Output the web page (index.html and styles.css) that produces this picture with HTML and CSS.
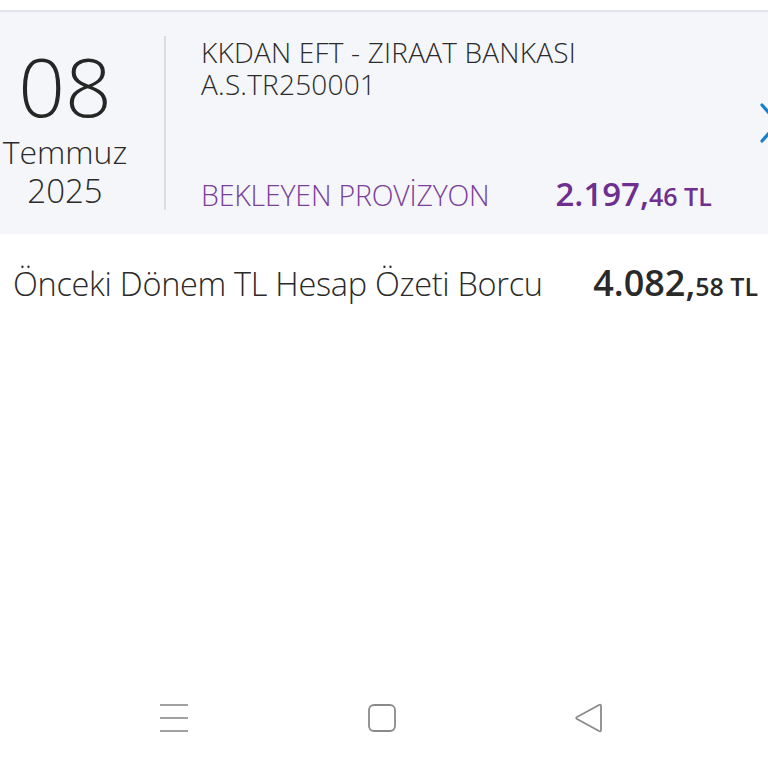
FILE: index.html
```html
<!DOCTYPE html>
<html>
<head>
<meta charset="utf-8">
<link rel="stylesheet" href="styles.css">
</head>
<body>
<div class="screen">
  <div class="top-gap"></div>
  <div class="card">
    <div class="date">
      <div class="day">08</div>
      <div class="month">Temmuz</div>
      <div class="year">2025</div>
    </div>
    <div class="divider"></div>
    <div class="info">
      <div class="desc"><div class="line">KKDAN EFT - ZIRAAT BANKASI</div><div class="line">A.S.TR250001</div></div>
      <div class="status-row">
        <span class="status">BEKLEYEN PROVİZYON</span>
        <span class="amount purple"><span class="big">2.197,</span><span class="small">46 TL</span></span>
      </div>
    </div>
    <div class="chev">
      <svg width="20" height="40" viewBox="0 0 20 40"><polyline points="2,2 18,20 2,38" fill="none" stroke="#1b7fc6" stroke-width="3.2" stroke-linecap="round" stroke-linejoin="round"/></svg>
    </div>
  </div>
  <div class="summary">
    <span class="label">Önceki Dönem TL Hesap Özeti Borcu</span>
    <span class="amount dark"><span class="big">4.082,</span><span class="small">58 TL</span></span>
  </div>
  <div class="spacer"></div>
  <div class="navbar">
    <svg class="nav-ico" width="30" height="30" viewBox="0 0 30 30"><g stroke="#8a8a8a" stroke-width="1.6"><line x1="1" y1="2" x2="29" y2="2"/><line x1="1" y1="15" x2="29" y2="15"/><line x1="1" y1="28" x2="29" y2="28"/></g></svg>
    <svg class="nav-ico" width="30" height="30" viewBox="0 0 30 30"><rect x="2" y="2" width="26" height="26" rx="5" fill="none" stroke="#8a8a8a" stroke-width="1.8"/></svg>
    <svg class="nav-ico" width="30" height="30" viewBox="0 0 30 30"><path d="M27 3 L27 27 Q27 29 25 28 L3 16 Q1.5 15 3 14 L25 2 Q27 1 27 3 Z" fill="none" stroke="#8a8a8a" stroke-width="1.8" stroke-linejoin="round"/></svg>
  </div>
</div>
</body>
</html>
```
FILE: styles.css
```css
html, body {
  margin: 0;
  padding: 0;
  background: #ffffff;
}
.screen {
  width: 768px;
  height: 768px;
  overflow: hidden;
  display: flex;
  flex-direction: column;
  font-family: "Open Sans", "Liberation Sans", sans-serif;
  color: #2b2b2b;
}
.top-gap {
  height: 10px;
  flex: none;
  border-bottom: 2px solid #e2e2ec;
}
.card {
  flex: none;
  height: 222px;
  background: #f5f6fa;
  display: flex;
  align-items: stretch;
  position: relative;
}
.date {
  width: 130px;
  flex: none;
  display: flex;
  flex-direction: column;
  align-items: center;
  font-weight: 300;
  padding-top: 30px;
}
.day {
  font-size: 82px;
  line-height: 86px;
  color: #262626;
}
.month {
  font-size: 32px;
  line-height: 38px;
  margin-top: 5px;
}
.year {
  font-size: 33px;
  line-height: 40px;
}
.divider {
  width: 2px;
  flex: none;
  background: #dcdce2;
  margin: 24px 0 24px 34px;
}
.info {
  flex: 1;
  display: flex;
  flex-direction: column;
  justify-content: space-between;
  padding: 24px 0 18px 35px;
}
.desc {
  font-size: 28px;
  font-weight: 300;
  color: #2b2b2b;
  letter-spacing: 0.2px;
}
.line {
  height: 32px;
  line-height: 32px;
}
.status-row {
  display: flex;
  align-items: baseline;
  gap: 66px;
}
.status {
  font-size: 28.5px;
  font-weight: 300;
  color: #7a3f9b;
  letter-spacing: -0.2px;
}
.amount {
  font-weight: 600;
  white-space: nowrap;
}
.purple .big {
  font-size: 33px;
}
.purple .small {
  font-size: 25px;
}
.dark .big {
  font-size: 36px;
}
.dark .small {
  font-size: 25px;
}
.purple {
  color: #6e2f8f;
}
.dark {
  color: #2a2a2a;
}
.chev {
  position: absolute;
  right: -12px;
  top: 91px;
}
.summary {
  flex: none;
  display: flex;
  align-items: baseline;
  justify-content: space-between;
  padding: 24px 10px 0 13px;
}
.label {
  font-size: 32.5px;
  font-weight: 300;
  color: #2a2a2a;
  letter-spacing: -0.3px;
}
.spacer {
  flex: 1;
}
.navbar {
  flex: none;
  height: 65px;
  display: flex;
  justify-content: space-between;
  padding: 0 164px 0 159px;
  align-items: flex-start;
}
```
